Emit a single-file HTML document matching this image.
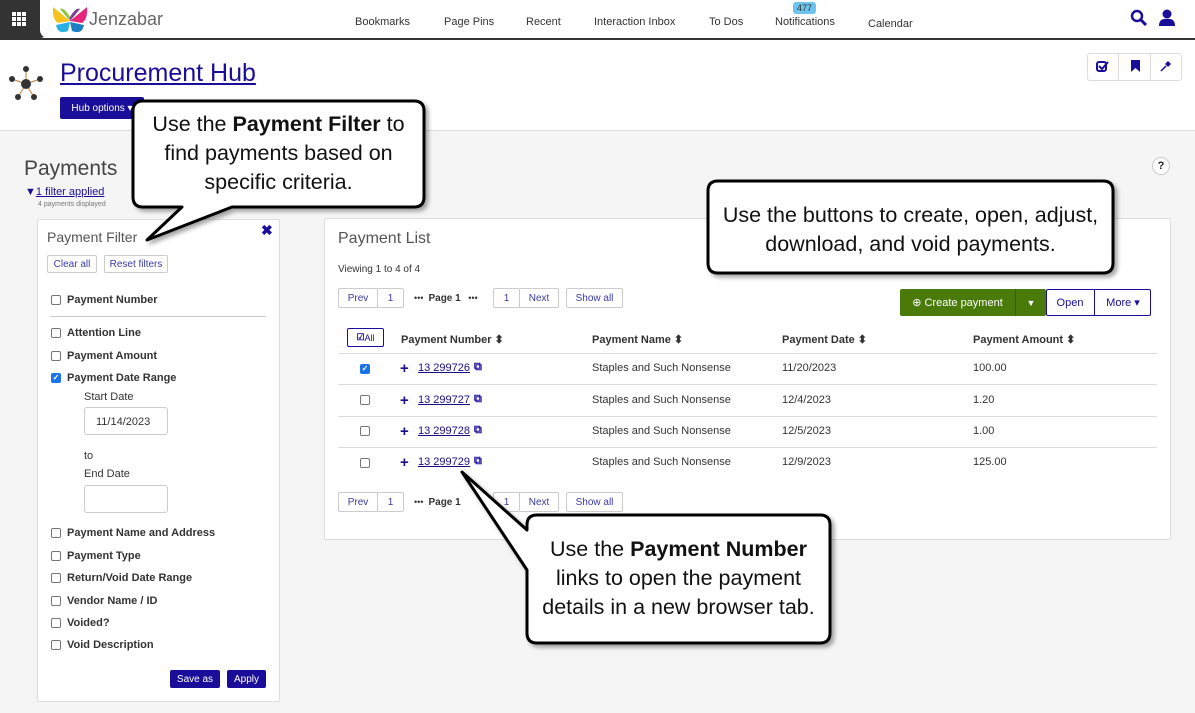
<!DOCTYPE html>
<html><head><meta charset="utf-8"><style>
*{box-sizing:border-box;margin:0;padding:0}
body{width:1195px;height:713px;overflow:hidden;background:#f5f5f5;font-family:"Liberation Sans",Arial,sans-serif;color:#222;position:relative;font-size:11px}
.a{position:absolute}
.nav{font-size:11px;color:#333}
.btn{position:absolute;border:1px solid #ccc;background:#fff;border-radius:2px;font-size:10px;color:#3a3aa8;display:flex;align-items:center;justify-content:center;height:20px}
.cb{position:absolute;width:10px;height:10px;border:1px solid #777;border-radius:2px;background:#fff}
.cbc{background:#1a73e8;border-color:#1a73e8;color:#fff;font-size:8px;line-height:8px;text-align:center;font-weight:bold}
.fl{position:absolute;left:67px;font-weight:bold;font-size:11px;color:#333}
.th{position:absolute;font-weight:bold;font-size:11px;color:#333;top:333px}
.td{position:absolute;font-size:11px;color:#333}
.hl{position:absolute;left:338px;width:819px;height:1px;background:#ddd}
.lnk{position:absolute;left:418px;font-size:11px;color:#1a0d8a;text-decoration:underline}
.plus{position:absolute;left:400px;font-weight:bold;font-size:15px;color:#1a0d8a;line-height:11px}
.co{position:absolute;text-align:center;font-size:21.5px;color:#111;line-height:29px;font-family:"Liberation Sans",sans-serif;white-space:nowrap}
.flx{display:flex;align-items:center;justify-content:center}
</style></head><body>
<!-- header -->
<div class="a" style="left:0;top:0;width:1195px;height:38px;background:#fff"></div>
<div class="a" style="left:0;top:0;width:48px;height:38px;background:#333;border-radius:0 0 8px 0"></div>
<div class="a" style="left:40px;top:0;width:10px;height:38px;background:#fff;border-radius:0 0 0 8px"></div>
<svg class="a" style="left:12px;top:12px" width="14" height="14" fill="#fff"><rect x="0" y="0" width="4" height="4"/><rect x="5" y="0" width="4" height="4"/><rect x="10" y="0" width="4" height="4"/><rect x="0" y="5" width="4" height="4"/><rect x="5" y="5" width="4" height="4"/><rect x="10" y="5" width="4" height="4"/><rect x="0" y="10" width="4" height="4"/><rect x="5" y="10" width="4" height="4"/><rect x="10" y="10" width="4" height="4"/></svg>
<div class="a" style="left:0;top:38px;width:1195px;height:2px;background:#333"></div>
<svg class="a" style="left:50px;top:5px" width="40" height="30"><path d="M20 16 L3 2 Q2 14 8 18Z" fill="#f7c21b"/><path d="M20 16 L37 2 Q38 14 32 18Z" fill="#e5267b"/><path d="M20 17 L6 20 Q8 30 18 26Z" fill="#2ab0e4"/><path d="M20 17 L34 20 Q32 30 22 26Z" fill="#1e7fc3"/><path d="M20 16 L10 4 Q14 2 20 12Z" fill="#8dc63f"/><path d="M20 16 L30 4 Q26 2 20 12Z" fill="#7b3f98"/></svg>
<div class="a" style="left:89px;top:9px;font-size:18px;color:#666">Jenzabar</div>
<div class="a nav" style="left:355px;top:16px">Bookmarks</div>
<div class="a nav" style="left:444px;top:16px">Page Pins</div>
<div class="a nav" style="left:526px;top:16px">Recent</div>
<div class="a nav" style="left:594px;top:16px">Interaction Inbox</div>
<div class="a nav" style="left:709px;top:16px">To Dos</div>
<div class="a" style="left:793px;top:2px;width:23px;height:12px;background:#6cc3ec;border-radius:3px;font-size:9px;text-align:center;line-height:12px;color:#333">477</div>
<div class="a nav" style="left:775px;top:16px">Notifications</div>
<div class="a nav" style="left:868px;top:18px">Calendar</div>
<svg class="a" style="left:1130px;top:9px" width="18" height="18"><circle cx="7" cy="7" r="5" stroke="#1a0d9a" stroke-width="2.5" fill="none"/><path d="M11 11 L16 16" stroke="#1a0d9a" stroke-width="3"/></svg>
<svg class="a" style="left:1158px;top:9px" width="18" height="18"><circle cx="9" cy="5" r="4.5" fill="#1a0d9a"/><path d="M1 17 Q1 9 9 10 Q17 9 17 17Z" fill="#1a0d9a"/></svg>
<!-- hub -->
<div class="a" style="left:0;top:40px;width:1195px;height:91px;background:#fff;border-bottom:1px solid #ddd"></div>
<svg class="a" style="left:6px;top:64px" width="40" height="38"><g stroke="#c57a3a" stroke-width="1"><line x1="20" y1="20" x2="20" y2="5"/><line x1="20" y1="20" x2="6" y2="15"/><line x1="20" y1="20" x2="34" y2="15"/><line x1="20" y1="20" x2="12" y2="33"/><line x1="20" y1="20" x2="28" y2="33"/></g><g fill="#333"><circle cx="20" cy="20" r="5"/><circle cx="20" cy="5" r="3"/><circle cx="6" cy="15" r="3"/><circle cx="34" cy="15" r="3"/><circle cx="12" cy="33" r="3"/><circle cx="28" cy="33" r="3"/></g></svg>
<div class="a" style="left:60px;top:59px;font-size:25px;color:#1a0d9a;text-decoration:underline">Procurement Hub</div>
<div class="a flx" style="left:60px;top:97px;width:84px;height:22px;background:#1a0d9a;border-radius:2px;color:#fff;font-size:10px">Hub options ▾</div>
<div class="a" style="left:1087px;top:53px;width:95px;height:28px;border:1px solid #ddd;border-radius:3px;background:#fff"></div>
<div class="a" style="left:1118px;top:53px;width:1px;height:28px;background:#ddd"></div>
<div class="a" style="left:1150px;top:53px;width:1px;height:28px;background:#ddd"></div>
<svg class="a" style="left:1096px;top:60px" width="14" height="14"><rect x="1" y="2" width="9" height="9" rx="2" fill="none" stroke="#1a0d9a" stroke-width="2"/><path d="M3 6 L6 9 L12 2" stroke="#1a0d9a" stroke-width="2" fill="none"/></svg>
<svg class="a" style="left:1130px;top:59px" width="12" height="14"><path d="M1 1 H10 V13 L5.5 9 L1 13Z" fill="#1a0d9a"/></svg>
<svg class="a" style="left:1159px;top:59px" width="14" height="14"><path d="M2 12 L7 7" stroke="#1a0d9a" stroke-width="1.5"/><path d="M6 5 L9 2 L12 5 L9 8Z" fill="#1a0d9a"/></svg>
<!-- payments head -->
<div class="a" style="left:24px;top:157px;font-size:21px;color:#444">Payments</div>
<div class="a" style="left:25px;top:186px;font-size:11px;color:#1a0d9a"><b>▼</b><u>1 filter applied</u></div>
<div class="a" style="left:38px;top:201px;font-size:7px;color:#777">4 payments displayed</div>
<div class="a" style="left:1152px;top:157px;width:18px;height:18px;border:1px solid #ccc;border-radius:50%;background:#fff;font-size:11px;font-weight:bold;text-align:center;line-height:16px">?</div>
<!-- filter panel -->
<div class="a" style="left:37px;top:219px;width:243px;height:483px;background:#fff;border:1px solid #ddd;border-radius:2px"></div>
<div class="a" style="left:47px;top:229px;font-size:14px;color:#555">Payment Filter</div>
<div class="a" style="left:261px;top:222px;font-size:14px;font-weight:bold;color:#1a0d9a">✖</div>
<div class="btn" style="left:47px;top:255px;width:50px;height:18px">Clear all</div>
<div class="btn" style="left:104px;top:255px;width:64px;height:18px">Reset filters</div>
<div class="cb" style="left:51px;top:295px"></div><div class="fl" style="top:294px">Payment Number</div>
<div class="a" style="left:50px;top:316px;width:216px;height:1px;background:#ccc"></div>
<div class="cb" style="left:51px;top:328px"></div><div class="fl" style="top:327px">Attention Line</div>
<div class="cb" style="left:51px;top:351px"></div><div class="fl" style="top:350px">Payment Amount</div>
<div class="cb cbc" style="left:51px;top:373px">✓</div><div class="fl" style="top:372px">Payment Date Range</div>
<div class="a" style="left:84px;top:391px;font-size:11px;color:#333">Start Date</div>
<div class="a" style="left:84px;top:407px;width:84px;height:28px;border:1px solid #ccc;border-radius:3px;font-size:11px;padding:8px 0 0 11px;color:#333;background:#fff">11/14/2023</div>
<div class="a" style="left:84px;top:450px;font-size:11px;color:#333">to</div>
<div class="a" style="left:84px;top:468px;font-size:11px;color:#333">End Date</div>
<div class="a" style="left:84px;top:485px;width:84px;height:28px;border:1px solid #ccc;border-radius:3px;background:#fff"></div>
<div class="cb" style="left:51px;top:528px"></div><div class="fl" style="top:527px">Payment Name and Address</div>
<div class="cb" style="left:51px;top:551px"></div><div class="fl" style="top:550px">Payment Type</div>
<div class="cb" style="left:51px;top:573px"></div><div class="fl" style="top:572px">Return/Void Date Range</div>
<div class="cb" style="left:51px;top:596px"></div><div class="fl" style="top:595px">Vendor Name / ID</div>
<div class="cb" style="left:51px;top:618px"></div><div class="fl" style="top:617px">Voided?</div>
<div class="cb" style="left:51px;top:640px"></div><div class="fl" style="top:639px">Void Description</div>
<div class="a flx" style="left:170px;top:670px;width:50px;height:18px;background:#1a0d9a;color:#fff;font-size:10px;border-radius:2px">Save as</div>
<div class="a flx" style="left:227px;top:670px;width:39px;height:18px;background:#1a0d9a;color:#fff;font-size:10px;border-radius:2px">Apply</div>
<!-- payment list -->
<div class="a" style="left:324px;top:218px;width:847px;height:322px;background:#fff;border:1px solid #ddd;border-radius:2px"></div>
<div class="a" style="left:338px;top:230px;font-size:16px;color:#555">Payment List</div>
<div class="a" style="left:338px;top:264px;font-size:10px;color:#333">Viewing 1 to 4 of 4</div>
<div class="btn" style="left:338px;top:288px;width:40px">Prev</div>
<div class="btn" style="left:377px;top:288px;width:27px">1</div>
<div class="a" style="left:414px;top:293px;font-size:9px;color:#333">•••&nbsp; <b style="font-size:10px">Page 1</b> &nbsp; •••</div>
<div class="btn" style="left:493px;top:288px;width:27px">1</div>
<div class="btn" style="left:519px;top:288px;width:40px">Next</div>
<div class="btn" style="left:566px;top:288px;width:57px">Show all</div>
<div class="a" style="left:900px;top:289px;width:146px;height:27px;background:#4a7a0a;border-radius:2px"></div>
<div class="a" style="left:1015px;top:289px;width:1px;height:27px;background:#385a08"></div>
<div class="a flx" style="left:900px;top:289px;width:115px;height:27px;color:#fff;font-size:11px">⊕&nbsp;Create payment</div>
<div class="a flx" style="left:1016px;top:289px;width:30px;height:27px;color:#fff;font-size:9px">▼</div>
<div class="a" style="left:1046px;top:289px;width:105px;height:27px;border:1px solid #1a0d9a;border-radius:2px;background:#fff"></div>
<div class="a" style="left:1094px;top:289px;width:1px;height:27px;background:#1a0d9a"></div>
<div class="a flx" style="left:1046px;top:289px;width:48px;height:27px;color:#1a0d9a;font-size:11px">Open</div>
<div class="a flx" style="left:1095px;top:289px;width:56px;height:27px;color:#1a0d9a;font-size:11px">More ▾</div>
<div class="a flx" style="left:347px;top:328px;width:37px;height:19px;border:1px solid #1a0d9a;border-radius:2px;font-size:9px;color:#1a0d9a"><b>☑</b>All</div>
<div class="th" style="left:401px">Payment Number ⬍</div>
<div class="th" style="left:592px">Payment Name ⬍</div>
<div class="th" style="left:782px">Payment Date ⬍</div>
<div class="th" style="left:973px">Payment Amount ⬍</div>
<div class="hl" style="top:353px"></div>
<div class="hl" style="top:384px"></div>
<div class="hl" style="top:416px"></div>
<div class="hl" style="top:447px"></div>
<div class="cb cbc" style="left:360px;top:364px">✓</div><div class="plus" style="top:363px">+</div><div class="lnk" style="top:362px">13 299726</div><div class="td" style="left:474px;top:361px;color:#1a0d9a;font-weight:bold">⧉</div>
<div class="td" style="left:592px;top:362px">Staples and Such Nonsense</div><div class="td" style="left:782px;top:362px">11/20/2023</div><div class="td" style="left:973px;top:362px">100.00</div>
<div class="cb" style="left:360px;top:395px"></div><div class="plus" style="top:395px">+</div><div class="lnk" style="top:394px">13 299727</div><div class="td" style="left:474px;top:393px;color:#1a0d9a;font-weight:bold">⧉</div>
<div class="td" style="left:592px;top:394px">Staples and Such Nonsense</div><div class="td" style="left:782px;top:394px">12/4/2023</div><div class="td" style="left:973px;top:394px">1.20</div>
<div class="cb" style="left:360px;top:426px"></div><div class="plus" style="top:426px">+</div><div class="lnk" style="top:425px">13 299728</div><div class="td" style="left:474px;top:424px;color:#1a0d9a;font-weight:bold">⧉</div>
<div class="td" style="left:592px;top:425px">Staples and Such Nonsense</div><div class="td" style="left:782px;top:425px">12/5/2023</div><div class="td" style="left:973px;top:425px">1.00</div>
<div class="cb" style="left:360px;top:458px"></div><div class="plus" style="top:457px">+</div><div class="lnk" style="top:456px">13 299729</div><div class="td" style="left:474px;top:455px;color:#1a0d9a;font-weight:bold">⧉</div>
<div class="td" style="left:592px;top:456px">Staples and Such Nonsense</div><div class="td" style="left:782px;top:456px">12/9/2023</div><div class="td" style="left:973px;top:456px">125.00</div>
<div class="btn" style="left:338px;top:492px;width:40px">Prev</div>
<div class="btn" style="left:377px;top:492px;width:27px">1</div>
<div class="a" style="left:414px;top:497px;font-size:9px;color:#333">•••&nbsp; <b style="font-size:10px">Page 1</b></div>
<div class="btn" style="left:493px;top:492px;width:27px">1</div>
<div class="btn" style="left:519px;top:492px;width:40px">Next</div>
<div class="btn" style="left:566px;top:492px;width:57px">Show all</div>
<!-- callouts -->
<svg class="a" style="left:0;top:0" width="1195" height="713">
<defs><filter id="sh"><feDropShadow dx="3" dy="3" stdDeviation="2" flood-opacity="0.35"/></filter></defs>
<g fill="#fff" stroke="#000" stroke-width="3" stroke-linejoin="round" filter="url(#sh)">
<path d="M143 101 H414 Q424 101 424 111 V197 Q424 207 414 207 H232 L147 240 L182 207 H143 Q133 207 133 197 V111 Q133 101 143 101Z"/>
<path d="M718 181 H1103 Q1113 181 1113 191 V263 Q1113 273 1103 273 H718 Q708 273 708 263 V191 Q708 181 718 181Z"/>
<path d="M537 515 H820 Q830 515 830 525 V633 Q830 643 820 643 H537 Q527 643 527 633 V570 L462 472 L527 530 V525 Q527 515 537 515Z"/>
</g></svg>
<div class="co" style="left:133px;top:110px;width:291px">Use the <b>Payment Filter</b> to<br>find payments based on<br>specific criteria.</div>
<div class="co" style="left:708px;top:201px;width:405px">Use the buttons to create, open, adjust,<br>download, and void payments.</div>
<div class="co" style="left:527px;top:535px;width:303px">Use the <b>Payment Number</b><br>links to open the payment<br>details in a new browser tab.</div>
</body></html>
